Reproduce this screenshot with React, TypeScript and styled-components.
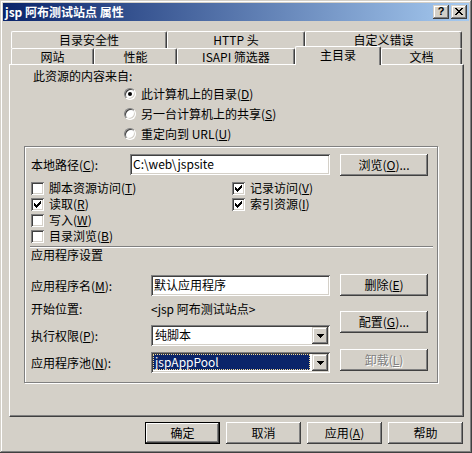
import React from 'react';
import styled, { createGlobalStyle, css } from 'styled-components';

const GlobalStyle = createGlobalStyle`
  html, body {
    margin: 0;
    padding: 0;
    background: #d4d0c8;
  }
  body {
    font-family: "Noto Sans CJK SC", "Liberation Sans", sans-serif;
    font-size: 12px;
    color: #000;
  }
  * {
    box-sizing: border-box;
  }
`;

const raised = css`
  box-shadow: inset -1px -1px #404040, inset 1px 1px #fff,
    inset -2px -2px #808080, inset 2px 2px #d4d0c8;
`;

const sunken = css`
  box-shadow: inset 1px 1px #808080, inset -1px -1px #fff,
    inset 2px 2px #404040, inset -2px -2px #d4d0c8;
`;

const Window = styled.div`
  width: 472px;
  height: 453px;
  padding: 3px;
  background: #d4d0c8;
  box-shadow: inset -1px -1px #404040, inset 1px 1px #d4d0c8,
    inset -2px -2px #808080, inset 2px 2px #fff;
  display: flex;
  flex-direction: column;
`;

const TitleBar = styled.div`
  height: 18px;
  display: flex;
  align-items: center;
  padding: 0 2px 0 2px;
  background: linear-gradient(to right, #0a246a, #a6caf0);
`;

const TitleText = styled.div`
  flex: 1;
  color: #fff;
  font-weight: bold;
  line-height: 14px;
  white-space: nowrap;
`;

const CaptionButton = styled.div<{ $gap?: number }>`
  width: 16px;
  height: 14px;
  margin-left: ${(p) => p.$gap || 0}px;
  background: #d4d0c8;
  box-shadow: inset -1px -1px #404040, inset 1px 1px #d4d0c8,
    inset -2px -2px #808080, inset 2px 2px #fff;
  display: flex;
  align-items: center;
  justify-content: center;
  font-family: "Liberation Sans", sans-serif;
  font-weight: bold;
  font-size: 11px;
  line-height: 11px;
  padding-bottom: 1px;
`;

const TabStrip = styled.div`
  margin: 10px 0 0 8px;
  width: 451px;
  display: flex;
  flex-direction: column;
`;

const TabRow = styled.div<{ $h: number }>`
  display: flex;
  height: ${(p) => p.$h}px;
`;

const Tab = styled.div<{ $w: number; $active?: boolean }>`
  width: ${(p) => p.$w}px;
  flex: none;
  display: flex;
  align-items: center;
  justify-content: center;
  background: #d4d0c8;
  border-top: 1px solid #fff;
  border-left: 1px solid #fff;
  border-right: 1px solid #404040;
  border-top-left-radius: 2px;
  border-top-right-radius: 2px;
  box-shadow: inset -1px 0 #808080;
  line-height: 14px;
  white-space: nowrap;
  ${(p) =>
    p.$active &&
    css`
      position: relative;
      z-index: 1;
      margin-top: -2px;
      margin-bottom: -1px;
      padding-bottom: 2px;
    `}
`;

const Panel = styled.div`
  margin-left: 6px;
  width: 455px;
  height: 353px;
  flex: none;
  border-top: 1px solid #fff;
  border-left: 1px solid #fff;
  border-right: 1px solid #404040;
  border-bottom: 1px solid #404040;
  box-shadow: inset -1px -1px #808080;
  padding: 4px 0 0 14px;
`;

const SourceHeading = styled.div`
  margin-left: 9px;
  line-height: 14px;
  height: 14px;
`;

const RadioList = styled.div`
  margin: 1px 0 0 100px;
  display: flex;
  flex-direction: column;
`;

const OptionRow = styled.label<{ $h: number }>`
  display: flex;
  align-items: center;
  height: ${(p) => p.$h}px;
  gap: 5px;
  line-height: 14px;
  white-space: nowrap;
`;

const Radio = styled.span<{ $checked?: boolean }>`
  position: relative;
  width: 12px;
  height: 12px;
  flex: none;
  border-radius: 50%;
  background: #fff;
  border: 1px solid;
  border-color: #808080 #fff #fff #808080;
  box-shadow: inset 1px 1px #404040, inset -1px -1px #d4d0c8;
  &::after {
    content: '';
    display: ${(p) => (p.$checked ? 'block' : 'none')};
    position: absolute;
    left: 3px;
    top: 3px;
    width: 4px;
    height: 4px;
    border-radius: 50%;
    background: #000;
  }
`;

const CheckBoxBox = styled.span`
  width: 13px;
  height: 13px;
  flex: none;
  background: #fff;
  ${sunken}
  display: flex;
`;

const Group = styled.div`
  margin-top: 2px;
  width: 414px;
  border: 1px solid #808080;
  box-shadow: inset 1px 1px #fff, 1px 1px #fff;
  padding: 7px 0 9px 6px;
`;

const PathRow = styled.div`
  display: flex;
  align-items: flex-start;
  height: 22px;
`;

const FieldLabel = styled.div<{ $w: number }>`
  width: ${(p) => p.$w}px;
  flex: none;
  line-height: 21px;
  white-space: nowrap;
`;

const TextBox = styled.div<{ $w: number }>`
  width: ${(p) => p.$w}px;
  height: 21px;
  flex: none;
  background: #fff;
  ${sunken}
  padding: 2px 0 0 3px;
  line-height: 16px;
  white-space: nowrap;
`;

const Button = styled.button<{ $w: number; $default?: boolean; $ml?: number; $mt?: number }>`
  width: ${(p) => p.$w}px;
  height: 22px;
  flex: none;
  margin-left: ${(p) => p.$ml || 0}px;
  margin-top: ${(p) => p.$mt || 0}px;
  padding: 0;
  border: ${(p) => (p.$default ? '1px solid #000' : 'none')};
  background: #d4d0c8;
  ${raised}
  font: inherit;
  line-height: 14px;
  color: #000;
  white-space: nowrap;
  &:disabled {
    color: #808080;
    text-shadow: 1px 1px #fff;
  }
`;

const CheckGrid = styled.div`
  margin-top: 4px;
  display: grid;
  grid-template-columns: 201px 1fr;
  grid-auto-rows: 16px;
`;

const Separator = styled.div`
  margin: 2px 0 0 -1px;
  width: 403px;
  height: 2px;
  border-top: 1px solid #808080;
  border-bottom: 1px solid #fff;
`;

const SectionTitle = styled.div`
  line-height: 14px;
  height: 14px;
`;

const AppArea = styled.div`
  margin-top: 12px;
  display: flex;
  align-items: flex-start;
`;

const AppFields = styled.div`
  width: 299px;
  display: flex;
  flex-direction: column;
`;

const AppRow = styled.div<{ $h: number; $mt?: number }>`
  display: flex;
  align-items: center;
  height: ${(p) => p.$h}px;
  margin-top: ${(p) => p.$mt || 0}px;
  white-space: nowrap;
`;

const AppButtons = styled.div`
  margin-left: 10px;
  display: flex;
  flex-direction: column;
`;

const SelectBox = styled.div`
  width: 179px;
  height: 21px;
  background: #fff;
  ${sunken}
  padding: 2px;
  display: flex;
`;

const SelectValue = styled.div<{ $focused?: boolean }>`
  flex: 1;
  margin: 0 2px 1px 0;
  padding-left: 2px;
  line-height: 16px;
  white-space: nowrap;
  ${(p) =>
    p.$focused &&
    css`
      background: #0a246a;
      color: #fff;
      outline: 1px dotted #f5db95;
      outline-offset: -1px;
    `}
`;

const DropButton = styled.div`
  width: 16px;
  height: 17px;
  flex: none;
  background: #d4d0c8;
  box-shadow: inset -1px -1px #404040, inset 1px 1px #d4d0c8,
    inset -2px -2px #808080, inset 2px 2px #fff;
  display: flex;
  align-items: center;
  justify-content: center;
`;

const Footer = styled.div`
  margin-top: 5px;
  padding-right: 6px;
  display: flex;
  justify-content: flex-end;
  gap: 6px;
`;

function Check({ checked }: { checked?: boolean }) {
  return (
    <CheckBoxBox>
      {checked && (
        <svg width="13" height="13" viewBox="0 0 13 13" shapeRendering="crispEdges">
          <rect x="9" y="3" width="1" height="1" fill="#000" />
          <rect x="8" y="4" width="2" height="1" fill="#000" />
          <rect x="3" y="5" width="1" height="1" fill="#000" />
          <rect x="7" y="5" width="3" height="1" fill="#000" />
          <rect x="3" y="6" width="2" height="1" fill="#000" />
          <rect x="6" y="6" width="3" height="1" fill="#000" />
          <rect x="3" y="7" width="5" height="1" fill="#000" />
          <rect x="4" y="8" width="3" height="1" fill="#000" />
          <rect x="5" y="9" width="1" height="1" fill="#000" />
        </svg>
      )}
    </CheckBoxBox>
  );
}

function Arrow() {
  return (
    <svg width="7" height="4" viewBox="0 0 7 4" shapeRendering="crispEdges">
      <rect x="0" y="0" width="7" height="1" fill="#000" />
      <rect x="1" y="1" width="5" height="1" fill="#000" />
      <rect x="2" y="2" width="3" height="1" fill="#000" />
      <rect x="3" y="3" width="1" height="1" fill="#000" />
    </svg>
  );
}

function CloseGlyph() {
  const rows = [
    [0, 6],
    [1, 5],
    [2, 4],
    [3, 3],
    [2, 4],
    [1, 5],
    [0, 6],
  ];
  return (
    <svg width="8" height="7" viewBox="0 0 8 7" shapeRendering="crispEdges">
      {rows.map(([a, b], y) => (
        <React.Fragment key={y}>
          <rect x={a} y={y} width="2" height="1" fill="#000" />
          {a !== b && <rect x={b} y={y} width="2" height="1" fill="#000" />}
        </React.Fragment>
      ))}
    </svg>
  );
}

const topTabs = [
  { name: '目录安全性', w: 156 },
  { name: 'HTTP 头', w: 138 },
  { name: '自定义错误', w: 157 },
];

const frontTabs = [
  { name: '网站', w: 83 },
  { name: '性能', w: 83 },
  { name: 'ISAPI 筛选器', w: 118 },
  { name: '主目录', w: 86, active: true },
  { name: '文档', w: 81 },
];

const sources = [
  { text: '此计算机上的目录', key: 'D', checked: true },
  { text: '另一台计算机上的共享', key: 'S' },
  { text: '重定向到 URL', key: 'U' },
];

const perms = [
  { text: '脚本资源访问', key: 'T' },
  { text: '记录访问', key: 'V', checked: true },
  { text: '读取', key: 'R', checked: true },
  { text: '索引资源', key: 'I', checked: true },
  { text: '写入', key: 'W' },
  null,
  { text: '目录浏览', key: 'B' },
];

export default function App() {
  return (
    <>
      <GlobalStyle />
      <Window>
        <TitleBar>
          <TitleText>jsp 阿布测试站点 属性</TitleText>
          <CaptionButton>?</CaptionButton>
          <CaptionButton $gap={2}>
            <CloseGlyph />
          </CaptionButton>
        </TitleBar>

        <TabStrip>
          <TabRow $h={17}>
            {topTabs.map((t) => (
              <Tab key={t.name} $w={t.w}>
                {t.name}
              </Tab>
            ))}
          </TabRow>
          <TabRow $h={16}>
            {frontTabs.map((t) => (
              <Tab key={t.name} $w={t.w} $active={t.active}>
                {t.name}
              </Tab>
            ))}
          </TabRow>
        </TabStrip>

        <Panel>
          <SourceHeading>此资源的内容来自:</SourceHeading>
          <RadioList>
            {sources.map((s) => (
              <OptionRow key={s.key} $h={20}>
                <Radio $checked={s.checked} />
                <span>
                  {s.text}(<u>{s.key}</u>)
                </span>
              </OptionRow>
            ))}
          </RadioList>

          <Group>
            <PathRow>
              <FieldLabel $w={99}>
                本地路径(<u>C</u>):
              </FieldLabel>
              <TextBox $w={200}>C:\web\jspsite</TextBox>
              <Button $w={88} $ml={10}>
                浏览(<u>O</u>)...
              </Button>
            </PathRow>

            <CheckGrid>
              {perms.map((p, i) =>
                p ? (
                  <OptionRow key={p.key} $h={16}>
                    <Check checked={p.checked} />
                    <span>
                      {p.text}(<u>{p.key}</u>)
                    </span>
                  </OptionRow>
                ) : (
                  <span key={i} />
                )
              )}
            </CheckGrid>

            <Separator />
            <SectionTitle>应用程序设置</SectionTitle>

            <AppArea>
              <AppFields>
                <AppRow $h={22}>
                  <FieldLabel $w={120}>
                    应用程序名(<u>M</u>):
                  </FieldLabel>
                  <TextBox $w={179}>默认应用程序</TextBox>
                </AppRow>
                <AppRow $h={16} $mt={4}>
                  <FieldLabel $w={120}>开始位置:</FieldLabel>
                  <span>&lt;jsp 阿布测试站点&gt;</span>
                </AppRow>
                <AppRow $h={21} $mt={9}>
                  <FieldLabel $w={120}>
                    执行权限(<u>P</u>):
                  </FieldLabel>
                  <SelectBox>
                    <SelectValue>纯脚本</SelectValue>
                    <DropButton>
                      <Arrow />
                    </DropButton>
                  </SelectBox>
                </AppRow>
                <AppRow $h={21} $mt={6}>
                  <FieldLabel $w={120}>
                    应用程序池(<u>N</u>):
                  </FieldLabel>
                  <SelectBox>
                    <SelectValue $focused>jspAppPool</SelectValue>
                    <DropButton>
                      <Arrow />
                    </DropButton>
                  </SelectBox>
                </AppRow>
              </AppFields>
              <AppButtons>
                <Button $w={88}>
                  删除(<u>E</u>)
                </Button>
                <Button $w={88} $mt={15}>
                  配置(<u>G</u>)...
                </Button>
                <Button $w={88} $mt={16} disabled>
                  卸载(<u>L</u>)
                </Button>
              </AppButtons>
            </AppArea>
          </Group>
        </Panel>

        <Footer>
          <Button $w={75} $default>
            确定
          </Button>
          <Button $w={75}>取消</Button>
          <Button $w={75}>
            应用(<u>A</u>)
          </Button>
          <Button $w={75}>帮助</Button>
        </Footer>
      </Window>
    </>
  );
}
